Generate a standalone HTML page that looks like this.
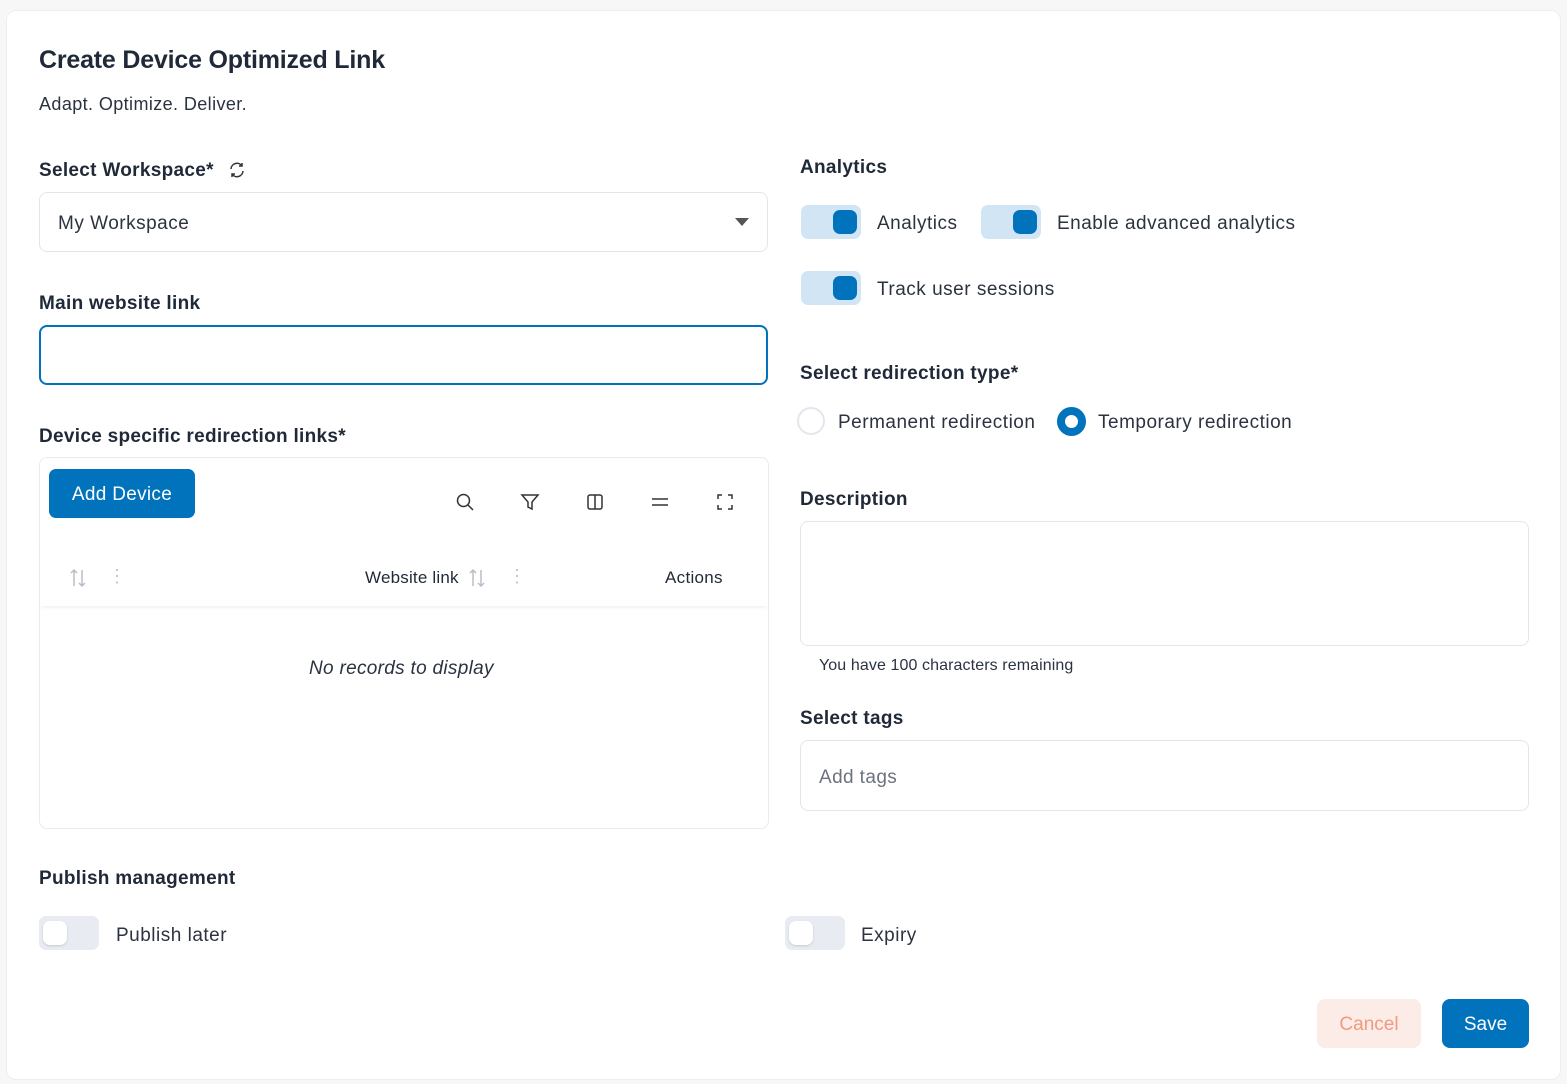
<!DOCTYPE html>
<html><head><meta charset="utf-8"><style>
*{box-sizing:border-box;margin:0;padding:0}
body{width:1567px;height:1084px;background:#f7f7f8;font-family:"Liberation Sans",sans-serif;color:#1f2937;position:relative;overflow:hidden}
.card{position:absolute;left:6px;top:10px;width:1555px;height:1070px;background:#fff;border:1px solid #eceef1;border-radius:10px}
.a{position:absolute;white-space:nowrap}
.lbl{font-size:19px;font-weight:600;color:#1f2937;letter-spacing:0.3px;margin-top:2px}
.txt{font-size:19px;color:#2b3340;letter-spacing:0.5px;margin-top:2px}
.box{position:absolute;border:1px solid #e2e6ec;border-radius:8px;background:#fff}
.tg{position:absolute;width:60px;height:34px;border-radius:7px;background:#d2e5f4}
.tg i{position:absolute;right:4px;top:5px;width:24px;height:24px;border-radius:7px;background:#0172bc}
.tg.off{background:#e8ecf2}
.tg.off i{left:4px;right:auto;background:#fff;box-shadow:0 1px 2px rgba(0,0,0,.15)}
.ic{position:absolute;stroke:#333;fill:none;stroke-width:1.5}
</style></head><body>
<div class="card"></div>
<div class="a" style="left:39px;top:46px;font-size:25px;font-weight:600;letter-spacing:-0.2px;color:#1f2937">Create Device Optimized Link</div>
<div class="a txt" style="left:39px;top:92px;font-size:18px;letter-spacing:0.4px">Adapt. Optimize. Deliver.</div>

<div class="a lbl" style="left:39px;top:158px">Select Workspace*</div>
<svg class="ic" style="left:228px;top:161px" width="18" height="18" viewBox="0 0 18 18"><path d="M3 8a6 6 0 0 1 11-3M14 2v3h-3M15 10a6 6 0 0 1-11 3M4 16v-3h3"/></svg>
<div class="box" style="left:39px;top:192px;width:729px;height:60px"></div>
<div class="a txt" style="left:58px;top:211px">My Workspace</div>
<svg style="position:absolute;left:735px;top:218px" width="14" height="8"><path d="M0 0h14L7 8z" fill="#555"/></svg>

<div class="a lbl" style="left:39px;top:291px">Main website link</div>
<div class="box" style="left:39px;top:325px;width:729px;height:60px;border:2px solid #0172bc"></div>

<div class="a lbl" style="left:39px;top:424px">Device specific redirection links*</div>
<div class="box" style="left:39px;top:457px;width:730px;height:372px;border-color:#e8ebef"></div>
<div class="a" style="left:49px;top:469px;width:146px;height:49px;background:#0172bc;border-radius:7px;color:#fff;font-size:19px;text-align:center;line-height:51px;letter-spacing:0.3px">Add Device</div>
<svg class="ic" style="left:455px;top:492px" width="20" height="20" viewBox="0 0 20 20"><circle cx="8.5" cy="8.5" r="6"/><path d="M13 13l5 5"/></svg>
<svg class="ic" style="left:520px;top:492px" width="20" height="20" viewBox="0 0 20 20"><path d="M2 3h16l-6 7v7l-4-2v-5z"/></svg>
<svg class="ic" style="left:585px;top:492px" width="20" height="20" viewBox="0 0 20 20"><rect x="3" y="3" width="14" height="14" rx="2"/><path d="M10 3v14"/></svg>
<svg class="ic" style="left:650px;top:492px" width="20" height="20" viewBox="0 0 20 20"><path d="M2 7h16M2 13h16"/></svg>
<svg class="ic" style="left:715px;top:492px" width="20" height="20" viewBox="0 0 20 20"><path d="M3 7V3h4M13 3h4v4M17 13v4h-4M7 17H3v-4"/></svg>
<div class="a" style="left:40px;top:540px;width:728px;height:66px;box-shadow:0 3px 4px -2px rgba(0,0,0,.08)"></div>
<svg class="ic" style="left:69px;top:568px;stroke:#b8bec8" width="18" height="20" viewBox="0 0 18 20"><path d="M5 18V2M2 5l3-3 3 3M13 2v16M10 15l3 3 3-3"/></svg>
<div class="a" style="left:108px;top:566px;color:#c0c5cd;font-size:18px">⋮</div>
<div class="a" style="left:365px;top:568px;font-size:17px;font-weight:500;color:#1f2937;letter-spacing:0.2px">Website link</div>
<svg class="ic" style="left:468px;top:568px;stroke:#b8bec8" width="18" height="20" viewBox="0 0 18 20"><path d="M5 18V2M2 5l3-3 3 3M13 2v16M10 15l3 3 3-3"/></svg>
<div class="a" style="left:508px;top:566px;color:#c0c5cd;font-size:18px">⋮</div>
<div class="a" style="left:665px;top:568px;font-size:17px;color:#1f2937;letter-spacing:0.3px">Actions</div>
<div class="a" style="left:309px;top:658px;font-size:19px;font-style:italic;color:#2b3340;letter-spacing:0.3px">No records to display</div>

<div class="a lbl" style="left:800px;top:155px">Analytics</div>
<div class="tg" style="left:801px;top:205px"><i></i></div>
<div class="a txt" style="left:877px;top:211px">Analytics</div>
<div class="tg" style="left:981px;top:205px"><i></i></div>
<div class="a txt" style="left:1057px;top:211px">Enable advanced analytics</div>
<div class="tg" style="left:801px;top:271px"><i></i></div>
<div class="a txt" style="left:877px;top:277px">Track user sessions</div>

<div class="a lbl" style="left:800px;top:361px">Select redirection type*</div>
<div class="a" style="left:797px;top:407px;width:28px;height:28px;border-radius:50%;border:2px solid #e3e7ed"></div>
<div class="a txt" style="left:838px;top:410px">Permanent redirection</div>
<div class="a" style="left:1057px;top:407px;width:29px;height:29px;border-radius:50%;border:8px solid #0172bc;background:#fff"></div>
<div class="a txt" style="left:1098px;top:410px">Temporary redirection</div>

<div class="a lbl" style="left:800px;top:487px">Description</div>
<div class="box" style="left:800px;top:521px;width:729px;height:125px"></div>
<div class="a" style="left:819px;top:657px;font-size:16px;color:#2b3340;letter-spacing:0.1px">You have 100 characters remaining</div>

<div class="a lbl" style="left:800px;top:706px">Select tags</div>
<div class="box" style="left:800px;top:740px;width:729px;height:71px"></div>
<div class="a" style="left:819px;top:767px;font-size:19px;color:#6b7280;letter-spacing:0.4px">Add tags</div>

<div class="a lbl" style="left:39px;top:866px">Publish management</div>
<div class="tg off" style="left:39px;top:916px"><i></i></div>
<div class="a txt" style="left:116px;top:923px">Publish later</div>
<div class="tg off" style="left:785px;top:916px"><i></i></div>
<div class="a txt" style="left:861px;top:923px">Expiry</div>

<div class="a" style="left:1317px;top:999px;width:104px;height:49px;background:#fcece7;border-radius:8px;color:#f29a80;font-size:19px;text-align:center;line-height:51px">Cancel</div>
<div class="a" style="left:1442px;top:999px;width:87px;height:49px;background:#0172bc;border-radius:8px;color:#fff;font-size:19px;text-align:center;line-height:51px">Save</div>
</body></html>
